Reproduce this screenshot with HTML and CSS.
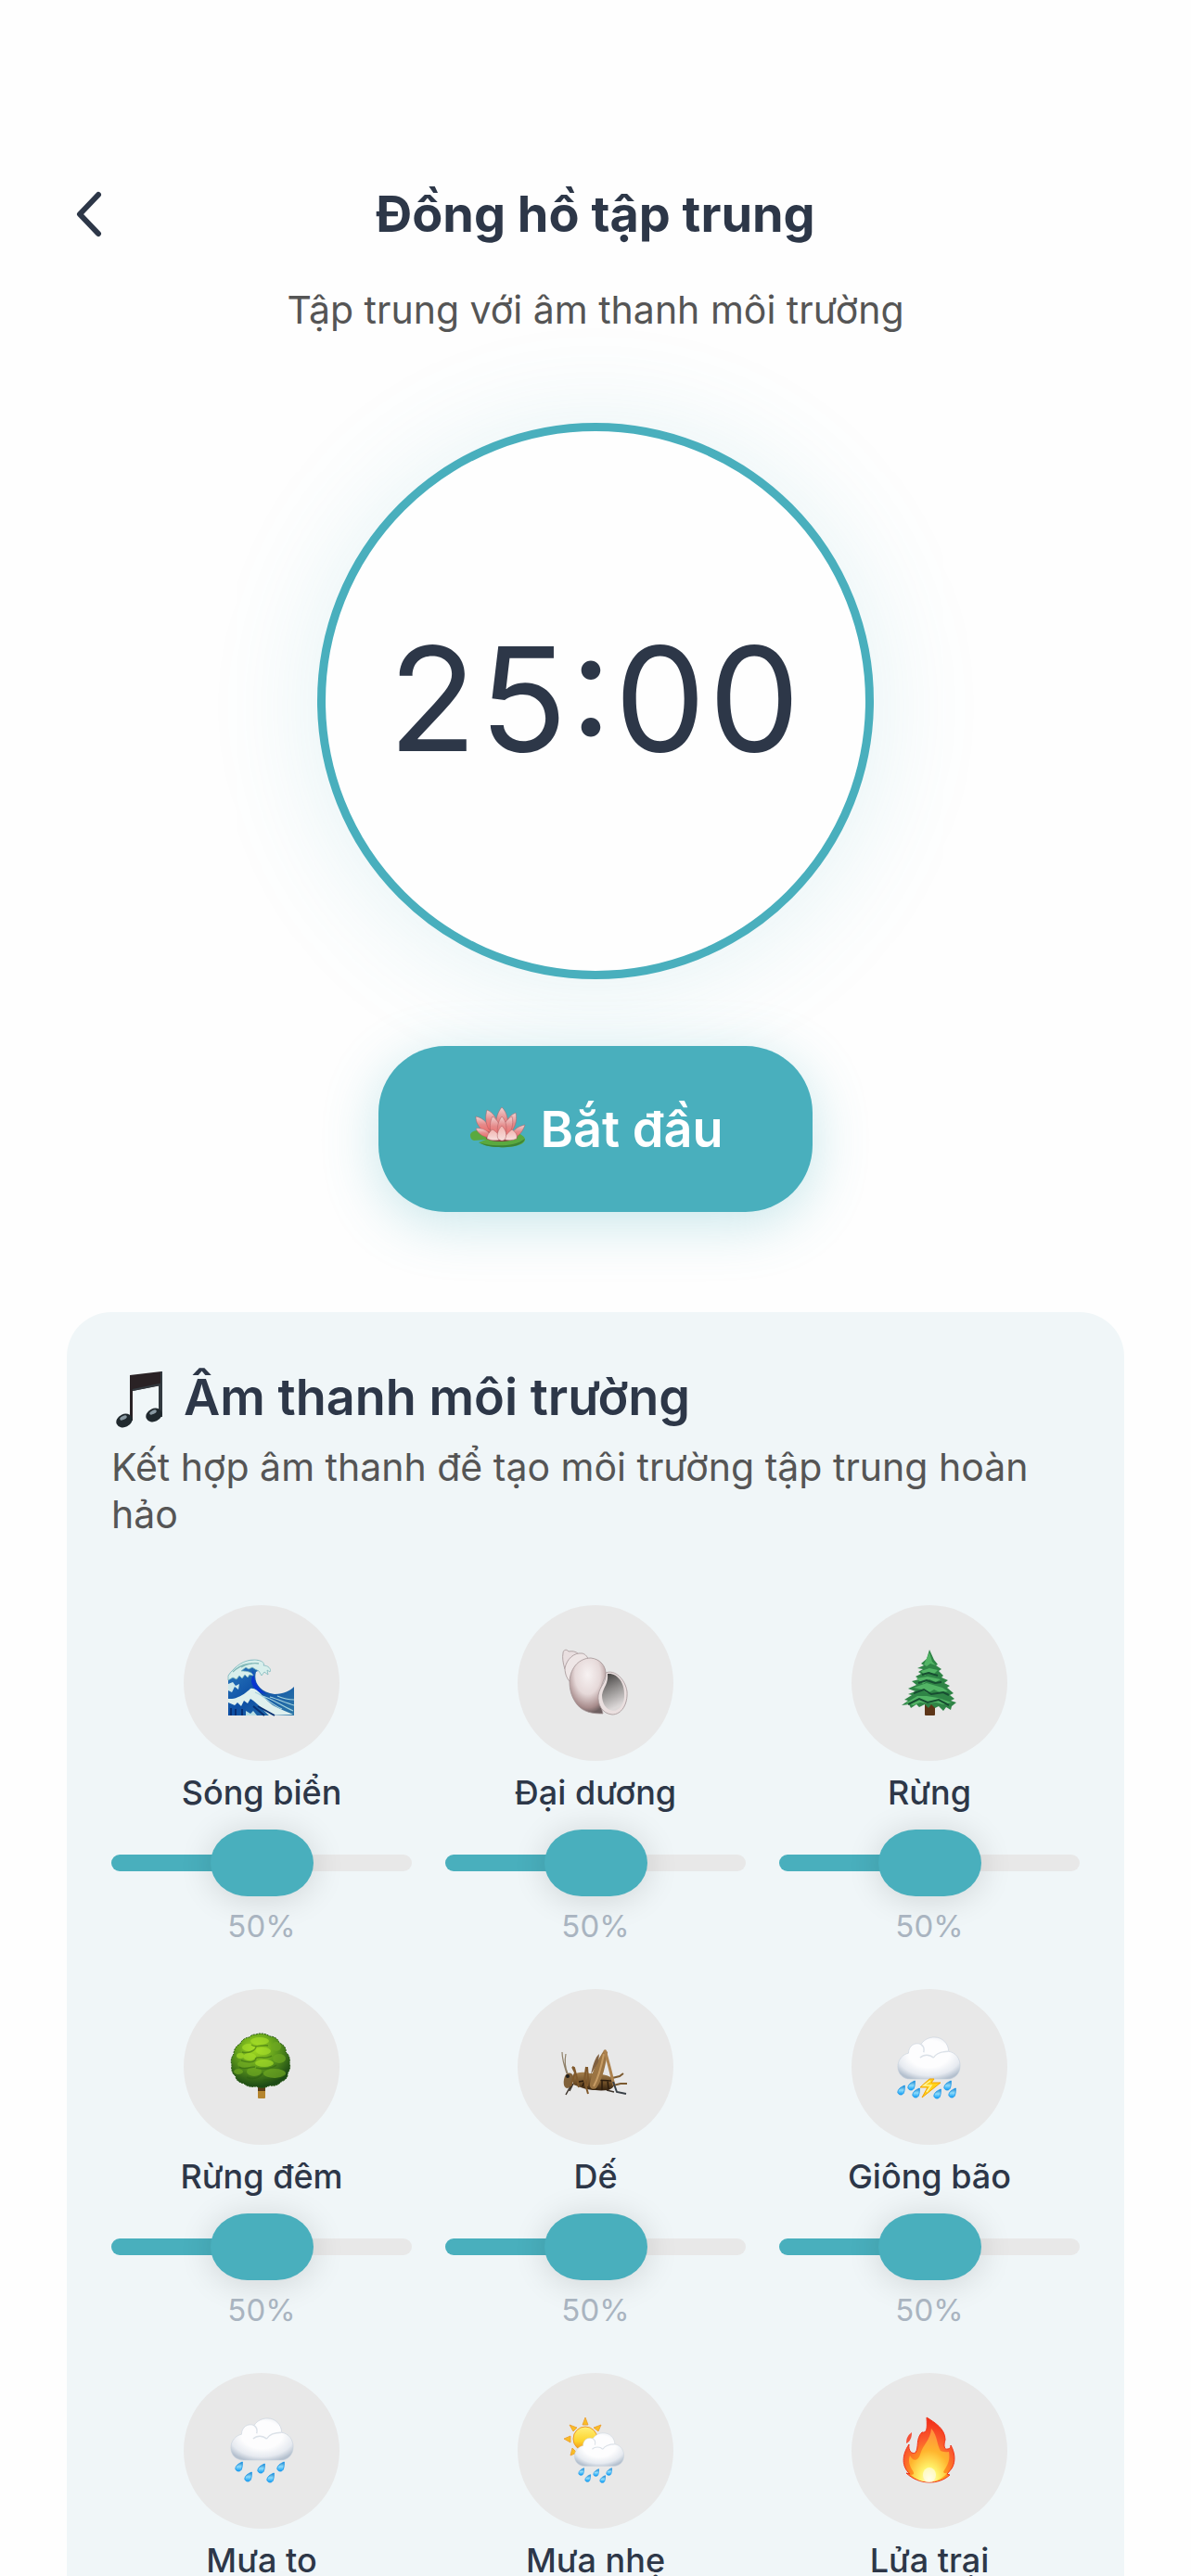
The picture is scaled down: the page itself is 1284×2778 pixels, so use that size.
FILE: index.html
```html
<!DOCTYPE html>
<html lang="vi">
  <head>
    <meta charset="UTF-8" />
    <meta name="viewport" content="width=device-width, initial-scale=1.0" />
    <title>Đồng hồ tập trung</title>
    <link rel="stylesheet" href="styles.css" />
  </head>
  <body>
    <!-- Shared shapes -->
    <svg class="defs" width="0" height="0" aria-hidden="true">
      <defs>
        <radialGradient id="cloud-fill" cx="0.5" cy="0.4" r="0.65">
          <stop offset="0.5" stop-color="#fdfdfe" />
          <stop offset="0.8" stop-color="#e6eaf0" />
          <stop offset="1" stop-color="#b4c0ce" />
        </radialGradient>
        <linearGradient id="drop-fill" x1="0" y1="0" x2="0" y2="1">
          <stop offset="0" stop-color="#1b7fc4" />
          <stop offset="0.5" stop-color="#8fdcfb" />
          <stop offset="1" stop-color="#0a9bf5" />
        </linearGradient>
        <symbol id="cloud" viewBox="0 0 72 50">
          <path d="M15 48C7 48 1 42 1 34C1 26 7 20 13 19C13 11 20 6 27 9C31 3 37 1 42 1C51 1 58 8 58 17C66 18 71 25 71 33C71 42 65 48 57 48Z" fill="url(#cloud-fill)" stroke="#c6d0dc" stroke-width="0.6" />
          <path d="M27 9C30 11 31 14 30 18M26 24C30 20 37 20 41 24M41 24C45 18 52 17 58 17" fill="none" stroke="#dbe1e8" stroke-width="1.5" />
        </symbol>
        <symbol id="drop" viewBox="0 0 12 14">
          <path d="M10 1C5 3 1 6 1 10C2 14 8 14 9 10C10 7 10 4 10 1Z" fill="url(#drop-fill)" stroke="#0f93ea" stroke-width="1" />
        </symbol>
      </defs>
    </svg>

    <main class="screen">
      <header class="top-bar">
        <button class="back-btn" type="button" aria-label="Quay lại">
          <svg viewBox="0 0 30 50" aria-hidden="true">
            <path d="M25 4L5 25L25 46" />
          </svg>
        </button>
        <h1>Đồng hồ tập trung</h1>
      </header>
      <p class="subtitle">Tập trung với âm thanh môi trường</p>

      <div class="timer" role="timer">25:00</div>

      <button class="start-btn" type="button">
        <svg class="lotus" viewBox="0 0 64 64" aria-hidden="true">
          <defs>
            <linearGradient id="petal" x1="0" y1="0" x2="0" y2="1">
              <stop offset="0" stop-color="#f0d3d3" />
              <stop offset="0.5" stop-color="#e58b8b" />
              <stop offset="1" stop-color="#f06a68" />
            </linearGradient>
            <linearGradient id="petal-front" x1="0" y1="0" x2="0" y2="1">
              <stop offset="0" stop-color="#f2b4b0" />
              <stop offset="1" stop-color="#f7dfdd" />
            </linearGradient>
          </defs>
          <path d="M3 38C3 34 10 32 17 33C35 31 62 34 62 43C62 49 47 52 34 51C25 51 17 49 12 46L20 43L7 44C4 43 3 41 3 38Z" fill="#5aa93f" />
          <path d="M12 46C22 50 50 52 62 42C60 49 47 52 34 51C25 51 17 49 12 46Z" fill="#3d8435" />
          <path d="M20 42C28 46 45 46 54 41L50 34L22 34Z" fill="#7d3438" />
          <g stroke="#a85c60" stroke-width="0.5">
            <g fill="url(#petal)">
              <path d="M9 18C18 20 23 26 25 35L17 34C12 29 9 25 9 18Z" />
              <path d="M52 14C54 23 51 31 45 37L38 31C41 23 45 17 52 14Z" />
              <path d="M21 11C28 14 32 20 34 30L23 32C19 25 19 18 21 11Z" />
              <path d="M37 8C43 14 45 23 42 34L32 34C29 23 32 14 37 8Z" />
              <path d="M9 31C16 30 23 33 27 41C19 41 12 38 9 31Z" />
              <path d="M62 27C59 36 54 41 46 42C47 34 53 29 62 27Z" />
              <path d="M27 18C33 22 36 28 36 38L27 39C23 31 24 24 27 18Z" />
              <path d="M48 18C50 27 48 34 42 39L37 36C37 28 42 21 48 18Z" />
              <path d="M37 18C42 23 43 31 41 38H33C31 31 33 23 37 18Z" />
            </g>
            <g fill="url(#petal-front)">
              <path d="M27 32C32 35 35 39 35 43C29 45 23 43 21 42C21 38 24 34 27 32Z" />
              <path d="M48 32C52 35 54 38 53 42C49 44 44 44 40 43C40 39 44 35 48 32Z" />
              <path d="M37 28C42 33 43 39 40 43C38 45 35 44 33 42C31 38 33 32 37 28Z" />
            </g>
          </g>
        </svg>
        <span>Bắt đầu</span>
      </button>

      <section class="sounds">
        <h2>
          <svg class="note" viewBox="0 0 66 66" aria-hidden="true">
            <path d="M20 9L54 5V20L23 26V58H20Z" fill="#2a2225" />
            <path d="M23 25L52 19V53H54V5" fill="none" stroke="#333a40" stroke-width="2" />
            <path d="M23 28L51 22V50H24Z" fill="#f0f6f8" />
            <ellipse cx="14" cy="58" rx="9" ry="7" transform="rotate(-25 14 58)" fill="#20292e" />
            <ellipse cx="46" cy="52" rx="9" ry="7" transform="rotate(-25 46 52)" fill="#20292e" />
            <ellipse cx="13" cy="55" rx="4" ry="2" transform="rotate(-25 13 55)" fill="#8999a2" />
            <ellipse cx="45" cy="49" rx="4" ry="2" transform="rotate(-25 45 49)" fill="#8999a2" />
          </svg>
          <span>Âm thanh môi trường</span>
        </h2>
        <p class="sounds-desc">Kết hợp âm thanh để tạo môi trường tập trung hoàn hảo</p>

        <div class="sound-grid">
          <div class="sound">
            <button class="sound-btn" type="button" aria-label="Sóng biển">
              <svg viewBox="0 0 72 72" aria-hidden="true">
                <defs>
                  <linearGradient id="sea" x1="0" y1="0" x2="1" y2="1">
                    <stop offset="0" stop-color="#2f7fc0" />
                    <stop offset="0.5" stop-color="#0d4fa5" />
                    <stop offset="1" stop-color="#2f79a8" />
                  </linearGradient>
                </defs>
                <path d="M0 71V28C8 17 17 12 27 11C35 11 40 14 38 20L30 24C27 34 33 46 50 48C60 48 67 44 71 40V71Z" fill="url(#sea)" />
                <path d="M27 22C27 34 33 44 42 48C34 47 26 43 25 34Z" fill="#0a35d0" />
                <path d="M0 28C8 17 17 11 28 11C35 11 40 14 38 17C43 17 47 21 45 24L42 22L43 27L39 24L36 28L33 23L29 21L26 19L22 21L19 19L14 23C20 23 26 24 27 28L23 27L21 30L18 27L15 31L12 28L9 32L5 30L0 33Z" fill="#d8efec" stroke="#7fb9bd" stroke-width="0.8" />
                <path d="M5 24C11 18 18 15 26 15M14 19C20 15 28 14 33 15" fill="none" stroke="#83b9b9" stroke-width="1.3" />
                <path d="M0 37L5 35L8 39L12 37L11 43L7 40L4 46L0 44Z" fill="#cfe8ea" />
                <path d="M0 53C10 54 19 47 24 42C32 40 38 54 50 61C58 65 64 67 70 70L44 71C36 63 31 58 27 55L24 53L21 58L17 55L14 61L10 57L7 60L0 57Z" fill="#dff0ee" />
                <path d="M29 46C38 49 44 58 58 64M37 50C48 53 58 61 70 66M45 51C55 54 61 57 71 60M53 50C60 53 65 54 71 54" fill="none" stroke="#a5d3de" stroke-width="1.2" />
                <path d="M3 63V71M8 64V71M15 64V71M27 61L39 71M32 61L50 71" fill="none" stroke="#082f72" stroke-width="2" />
                <path d="M19 71V66L24 69L27 66L31 71Z" fill="#b7dde2" />
              </svg>
            </button>
            <label class="sound-name" for="vol-waves">Sóng biển</label>
            <input class="volume" id="vol-waves" type="range" min="0" max="100" value="50" />
            <span class="percent">50%</span>
          </div>

          <div class="sound">
            <button class="sound-btn" type="button" aria-label="Đại dương">
              <svg viewBox="0 0 72 72" aria-hidden="true">
                <defs>
                  <radialGradient id="shell" cx="0.5" cy="0.3" r="0.7">
                    <stop offset="0" stop-color="#f7f2f2" />
                    <stop offset="0.5" stop-color="#e6d9d9" />
                    <stop offset="0.85" stop-color="#a78b8b" />
                    <stop offset="1" stop-color="#6d5f60" />
                  </radialGradient>
                  <linearGradient id="shell-hole" x1="0" y1="0" x2="0.3" y2="1">
                    <stop offset="0" stop-color="#3a3837" />
                    <stop offset="0.5" stop-color="#8f8c8b" />
                    <stop offset="1" stop-color="#dcd8d8" />
                  </linearGradient>
                </defs>
                <g stroke="#a39496" stroke-width="0.8">
                  <path d="M1 4C1 0 5 -1 7 2C13 1 16 3 18 5L9 20L3 21C1 15 0 8 1 4Z" fill="#e9dfe0" />
                  <path d="M3 20C5 10 13 3 21 4C24 4 27 7 28 10L10 36C6 33 3 27 3 20Z" fill="#eee6e6" />
                  <path d="M8 34C9 19 19 9 31 9C41 10 48 18 47 28C43 37 38 46 44 69C34 69 23 68 16 59C10 51 8 43 8 34Z" fill="url(#shell)" />
                  <path d="M47 25C57 21 68 32 70 45C71 59 64 70 54 70C43 69 38 59 39 49C41 38 48 36 47 25Z" fill="#eadfdf" />
                </g>
                <path d="M49 26C60 25 67 36 67 47C68 58 62 66 55 66C47 65 43 58 43 49C45 39 50 37 49 26Z" fill="url(#shell-hole)" />
              </svg>
            </button>
            <label class="sound-name" for="vol-ocean">Đại dương</label>
            <input class="volume" id="vol-ocean" type="range" min="0" max="100" value="50" />
            <span class="percent">50%</span>
          </div>

          <div class="sound">
            <button class="sound-btn" type="button" aria-label="Rừng">
              <svg viewBox="0 0 72 72" aria-hidden="true">
                <rect x="31" y="58" width="11" height="13" rx="1" fill="#5d3518" />
                <path d="M36 0L41 11L45 16L43 17L49 21L46 23L51 28L49 30L56 33L52 36L58 39L55 41L62 47L58 49L63 53L59 55L65 57L60 61L59 65L54 62L51 66L46 61L42 63L38 59L35 63L31 59L25 62L22 59L16 63L14 59L6 60L13 55L9 54L17 49L13 48L21 45L13 42L22 38L17 34L25 32L21 29L27 26L24 24L29 21L23 20L30 17L27 15L33 10Z" fill="#2f8446" />
                <path d="M36 3L39 13L43 17L37 15L33 18L30 16ZM27 23L36 20L45 22L40 27L36 24L31 28ZM22 31L34 29L48 32L43 35L36 32L29 37ZM19 41L33 36L50 41L56 45L47 46L41 43L34 47L28 43ZM10 58L23 50L33 50L45 52L60 57L51 59L43 57L35 58L26 57L19 60Z" fill="#52b465" />
                <path d="M28 27L35 25L45 28M24 36L33 33L42 36L49 35M19 47L30 43L38 48L51 46L57 49M13 59L25 53L34 57L46 54L57 60" fill="none" stroke="#174d31" stroke-width="2" />
              </svg>
            </button>
            <label class="sound-name" for="vol-forest">Rừng</label>
            <input class="volume" id="vol-forest" type="range" min="0" max="100" value="50" />
            <span class="percent">50%</span>
          </div>

          <div class="sound">
            <button class="sound-btn" type="button" aria-label="Rừng đêm">
              <svg viewBox="0 0 72 72" aria-hidden="true">
                <defs>
                  <radialGradient id="crown" cx="0.42" cy="0.28" r="0.7">
                    <stop offset="0" stop-color="#a4dd20" />
                    <stop offset="0.5" stop-color="#5f9c1c" />
                    <stop offset="1" stop-color="#1d4a15" />
                  </radialGradient>
                </defs>
                <rect x="32" y="54" width="8" height="16" rx="1" fill="#b5852f" />
                <path d="M32 56H40V62H32Z" fill="#5b3d18" />
                <path d="M30 1C34 -1 41 0 45 3C50 3 54 6 55 10C60 12 63 16 62 20C66 23 67 28 66 32C68 37 65 41 64 43C65 48 60 51 57 52C54 56 49 57 45 56C40 59 34 59 30 57C25 58 20 57 17 54C12 53 8 50 8 46C4 43 3 38 4 34C2 29 4 25 6 22C6 17 9 13 13 11C15 6 20 4 23 4C25 1 28 1 30 1Z" fill="url(#crown)" stroke="#285a15" stroke-width="1" stroke-dasharray="2 1" />
                <g fill="#a8e02a" opacity="0.65">
                  <ellipse cx="34" cy="8" rx="10" ry="4" />
                  <ellipse cx="22" cy="15" rx="7" ry="4" />
                  <ellipse cx="38" cy="19" rx="8" ry="4" />
                  <ellipse cx="23" cy="25" rx="7" ry="4" />
                  <ellipse cx="39" cy="32" rx="10" ry="4" />
                  <ellipse cx="13" cy="24" rx="4" ry="3" />
                </g>
                <g fill="#6fa922" opacity="0.7">
                  <ellipse cx="18" cy="33" rx="8" ry="4" />
                  <ellipse cx="28" cy="41" rx="8" ry="5" />
                  <ellipse cx="50" cy="43" rx="12" ry="5" />
                  <ellipse cx="52" cy="14" rx="5" ry="5" />
                  <ellipse cx="55" cy="27" rx="7" ry="5" />
                  <ellipse cx="11" cy="41" rx="5" ry="3" />
                </g>
                <path d="M25 12C30 16 36 12 43 13M15 20C22 22 30 18 30 14M29 27C33 24 41 28 47 24M14 29C22 32 29 31 30 27M30 37C37 39 47 38 52 34M12 36C16 40 24 36 29 36M20 47C26 50 34 48 37 43M38 50C45 50 55 50 61 45" fill="none" stroke="#2c5e10" stroke-width="1.5" opacity="0.5" />
              </svg>
            </button>
            <label class="sound-name" for="vol-night">Rừng đêm</label>
            <input class="volume" id="vol-night" type="range" min="0" max="100" value="50" />
            <span class="percent">50%</span>
          </div>

          <div class="sound">
            <button class="sound-btn" type="button" aria-label="Dế">
              <svg viewBox="0 0 72 72" aria-hidden="true">
                <defs>
                  <linearGradient id="bug" x1="0" y1="0" x2="0" y2="1">
                    <stop offset="0" stop-color="#a5804d" />
                    <stop offset="0.6" stop-color="#6d4d26" />
                    <stop offset="1" stop-color="#35220f" />
                  </linearGradient>
                </defs>
                <path d="M5 43C2 34 0 27 0 20M6 43C2 34 3 27 4 22" fill="none" stroke="#8f8069" stroke-width="1.2" />
                <path d="M54 48L62 46L66 43M55 56L63 54L70 54" fill="none" stroke="#7b5a30" stroke-width="2" />
                <path d="M48 61L56 63M10 55L4 66M12 54L8 62" fill="none" stroke="#3c332a" stroke-width="1.5" />
                <path d="M12 45C16 41 24 41 30 43C40 43 52 45 55 49C58 54 56 59 50 61C40 62 27 61 20 58L12 55Z" fill="url(#bug)" />
                <path d="M34 50L54 51M38 51L37 60M43 51L43 61M49 50L50 60M18 52L24 51L22 57" fill="none" stroke="#2c1c0c" stroke-width="1.5" />
                <path d="M3 46C6 41 11 42 12 46C13 53 9 59 5 59C1 58 1 51 3 46Z" fill="#80613a" />
                <circle cx="6" cy="46" r="2" fill="#1c1c1d" />
                <path d="M11 36L14 42L9 57M11 36L13 37L16 48L18 58M26 36L24 51L28 65M27 36L28 49L27 57" fill="none" stroke="#80592c" stroke-width="2" />
                <path d="M46 17L49 20C47 34 44 48 37 59C33 61 29 59 30 54C32 42 38 28 46 17Z" fill="#9b7443" />
                <path d="M31 44C33 34 36 25 40 22L39 31" fill="#806040" />
                <path d="M45 22C42 37 39 48 34 57" fill="none" stroke="#c69b64" stroke-width="2" />
                <path d="M46 18C50 31 53 44 56 56" fill="none" stroke="#ad824e" stroke-width="3" />
                <path d="M55 52L59 63L69 65" fill="none" stroke="#394047" stroke-width="2" />
              </svg>
            </button>
            <label class="sound-name" for="vol-cricket">Dế</label>
            <input class="volume" id="vol-cricket" type="range" min="0" max="100" value="50" />
            <span class="percent">50%</span>
          </div>

          <div class="sound">
            <button class="sound-btn" type="button" aria-label="Giông bão">
              <svg viewBox="0 0 72 72" aria-hidden="true">
                <use href="#cloud" x="0" y="3" width="71" height="48" />
                <path d="M36 49H41L38 53H48L28 69L34 58H26Z" fill="#ffd21a" stroke="#f5a300" stroke-width="1" />
                <path d="M37 51L30 56H38L33 63" fill="none" stroke="#fff39a" stroke-width="1.5" />
                <use href="#drop" x="1" y="55" width="10" height="12" />
                <use href="#drop" x="12" y="50" width="10" height="12" />
                <use href="#drop" x="17" y="58" width="10" height="12" />
                <use href="#drop" x="40" y="59" width="10" height="12" />
                <use href="#drop" x="51" y="50" width="10" height="12" />
                <use href="#drop" x="56" y="58" width="10" height="12" />
              </svg>
            </button>
            <label class="sound-name" for="vol-storm">Giông bão</label>
            <input class="volume" id="vol-storm" type="range" min="0" max="100" value="50" />
            <span class="percent">50%</span>
          </div>

          <div class="sound">
            <button class="sound-btn" type="button" aria-label="Mưa to">
              <svg viewBox="0 0 72 72" aria-hidden="true">
                <use href="#cloud" x="1" y="0" width="71" height="48" />
                <use href="#drop" x="7" y="47" width="10" height="12" />
                <use href="#drop" x="17" y="58" width="10" height="12" />
                <use href="#drop" x="31" y="49" width="10" height="12" />
                <use href="#drop" x="41" y="59" width="10" height="12" />
                <use href="#drop" x="52" y="47" width="10" height="12" />
              </svg>
            </button>
            <label class="sound-name" for="vol-heavy-rain">Mưa to</label>
            <input class="volume" id="vol-heavy-rain" type="range" min="0" max="100" value="50" />
            <span class="percent">50%</span>
          </div>

          <div class="sound">
            <button class="sound-btn" type="button" aria-label="Mưa nhẹ">
              <svg viewBox="0 0 72 72" aria-hidden="true">
                <defs>
                  <linearGradient id="sun" x1="0" y1="0" x2="0" y2="1">
                    <stop offset="0" stop-color="#fff07a" />
                    <stop offset="0.6" stop-color="#fdd32c" />
                    <stop offset="1" stop-color="#f28a13" />
                  </linearGradient>
                </defs>
                <path d="M25 0L28 8H22ZM8 8L16 11L12 15ZM42 8L39 15L34 11ZM2 23L9 20V27ZM9 41L11 33L16 38Z" fill="#f9bd25" stroke="#eb9a2b" stroke-width="0.8" stroke-linejoin="round" />
                <circle cx="25" cy="23" r="13" fill="url(#sun)" stroke="#ee9a26" stroke-width="1" />
                <use href="#cloud" x="12" y="16" width="56" height="38" />
                <use href="#drop" x="17" y="54" width="8" height="9" />
                <use href="#drop" x="24" y="61" width="8" height="9" />
                <use href="#drop" x="33" y="55" width="8" height="9" />
                <use href="#drop" x="40" y="62" width="8" height="9" />
                <use href="#drop" x="47" y="54" width="8" height="9" />
              </svg>
            </button>
            <label class="sound-name" for="vol-light-rain">Mưa nhẹ</label>
            <input class="volume" id="vol-light-rain" type="range" min="0" max="100" value="50" />
            <span class="percent">50%</span>
          </div>

          <div class="sound">
            <button class="sound-btn" type="button" aria-label="Lửa trại">
              <svg viewBox="0 0 72 72" aria-hidden="true">
                <defs>
                  <radialGradient id="fire-outer" cx="0.5" cy="0.9" r="0.85">
                    <stop offset="0" stop-color="#ffe14a" />
                    <stop offset="0.35" stop-color="#ff9a1c" />
                    <stop offset="0.65" stop-color="#fb5d2e" />
                    <stop offset="1" stop-color="#f3301a" />
                  </radialGradient>
                  <radialGradient id="fire-inner" cx="0.5" cy="0.95" r="0.9">
                    <stop offset="0" stop-color="#fffde0" />
                    <stop offset="0.25" stop-color="#fff36b" />
                    <stop offset="0.6" stop-color="#ffb52e" />
                    <stop offset="1" stop-color="#ff8f3c" />
                  </radialGradient>
                </defs>
                <path d="M33 0C41 5 53 12 53 24C51 31 52 35 56 34C58 34 59 32 59 30C63 37 65 47 60 55L55 61L58 62C46 73 25 73 11 60L15 61C6 53 6 41 14 29C13 36 17 40 21 38C25 32 21 23 28 16C33 17 34 13 33 0Z" fill="url(#fire-outer)" stroke="#f0331a" stroke-width="1" />
                <path d="M17 16C17 22 15 26 11 28C11 22 13 19 17 16Z" fill="#f4523a" />
                <path d="M38 12C45 20 44 30 48 36C52 38 55 37 57 37C59 49 53 54 51 59C53 61 55 60 56 59C46 72 28 73 16 62C20 62 20 60 17 56C14 51 13 46 15 41C18 48 24 47 26 40C29 29 37 25 38 12Z" fill="url(#fire-inner)" />
                <ellipse cx="36" cy="62" rx="7" ry="8" fill="#fffef0" opacity="0.6" />
              </svg>
            </button>
            <label class="sound-name" for="vol-campfire">Lửa trại</label>
            <input class="volume" id="vol-campfire" type="range" min="0" max="100" value="50" />
            <span class="percent">50%</span>
          </div>
        </div>
      </section>
    </main>
  </body>
</html>
```
FILE: styles.css
```css
* {
  margin: 0;
  padding: 0;
  box-sizing: border-box;
}

body {
  background-color: #fefefe;
  color: #2d3748;
  font-family: Inter, "Noto Sans", sans-serif;
}

button {
  border: none;
  background: none;
  font-family: inherit;
  color: inherit;
  cursor: pointer;
}

.defs {
  position: absolute;
}

/* Scrolling screen */
.screen {
  display: flex;
  flex-direction: column;
  align-items: center;
  height: 100vh;
  padding: 198px 72px 0;
  overflow-y: auto;
  scrollbar-width: none;
}

.screen > * {
  flex-shrink: 0;
}

/* Header */
.top-bar {
  display: grid;
  grid-template-columns: 48px 1fr 48px;
  align-items: center;
  width: 100%;
}

.top-bar h1 {
  font-size: 54px;
  font-weight: 700;
  line-height: 66px;
  text-align: center;
}

.back-btn {
  display: flex;
  justify-content: center;
}

.back-btn svg {
  width: 30px;
  height: 50px;
  fill: none;
  stroke: #2d3748;
  stroke-width: 6;
  stroke-linecap: round;
  stroke-linejoin: round;
}

.subtitle {
  margin-top: 45px;
  color: #555;
  font-size: 41px;
  line-height: 51px;
  text-align: center;
}

/* Timer */
.timer {
  display: flex;
  align-items: center;
  justify-content: center;
  width: 600px;
  height: 600px;
  margin-top: 96px;
  padding-bottom: 6px;
  border: 9px solid #49afbd;
  border-radius: 50%;
  background-color: #fefefe;
  box-shadow: 0 6px 120px rgba(73, 175, 189, 0.15);
  font-size: 156px;
  font-feature-settings: "calt" 1;
  letter-spacing: 3px;
}

.start-btn {
  display: flex;
  align-items: center;
  gap: 14px;
  margin-top: 72px;
  padding: 54px 96px;
  border-radius: 72px;
  background-color: #49afbd;
  box-shadow: 0 12px 60px rgba(73, 175, 189, 0.3);
  color: #fff;
  font-size: 54px;
  font-weight: 600;
  line-height: 71px;
}

.lotus {
  width: 64px;
  height: 64px;
}

/* Sound card */
.sounds {
  width: 100%;
  margin-top: 108px;
  padding: 48px;
  border-radius: 48px;
  background-color: #f0f6f8;
}

.sounds h2 {
  display: flex;
  align-items: center;
  gap: 12px;
  font-size: 54px;
  font-weight: 600;
  line-height: 88px;
}

.note {
  width: 66px;
  height: 66px;
}

.sounds-desc {
  margin-top: 6px;
  color: #555;
  font-size: 41px;
  line-height: 51px;
}

.sound-grid {
  display: grid;
  grid-template-columns: repeat(3, 1fr);
  gap: 48px 36px;
  margin-top: 72px;
}

.sound {
  display: flex;
  flex-direction: column;
  align-items: center;
}

.sound-btn {
  display: flex;
  align-items: center;
  justify-content: center;
  width: 168px;
  height: 168px;
  border-radius: 50%;
  background-color: #e8e8e8;
}

.sound-btn svg {
  width: 72px;
  height: 72px;
  overflow: visible;
}

.sound-name {
  margin-top: 12px;
  font-size: 36px;
  font-weight: 500;
  line-height: 44px;
}

/* Volume slider */
.volume {
  width: 100%;
  height: 72px;
  margin-top: 18px;
  appearance: none;
  background: none;
  cursor: pointer;
}

.volume::-webkit-slider-runnable-track {
  height: 18px;
  border-radius: 9px;
  background: linear-gradient(to right, #49afbd 50%, #e8e8e8 50%);
}

.volume::-webkit-slider-thumb {
  width: 111px;
  height: 72px;
  margin-top: -27px;
  border-radius: 40px / 36px;
  background-color: #49afbd;
  box-shadow: 0 3px 36px rgba(0, 0, 0, 0.14);
  appearance: none;
}

.percent {
  margin-top: 12px;
  color: #a9b4c0;
  font-size: 33px;
  line-height: 40px;
}
```
